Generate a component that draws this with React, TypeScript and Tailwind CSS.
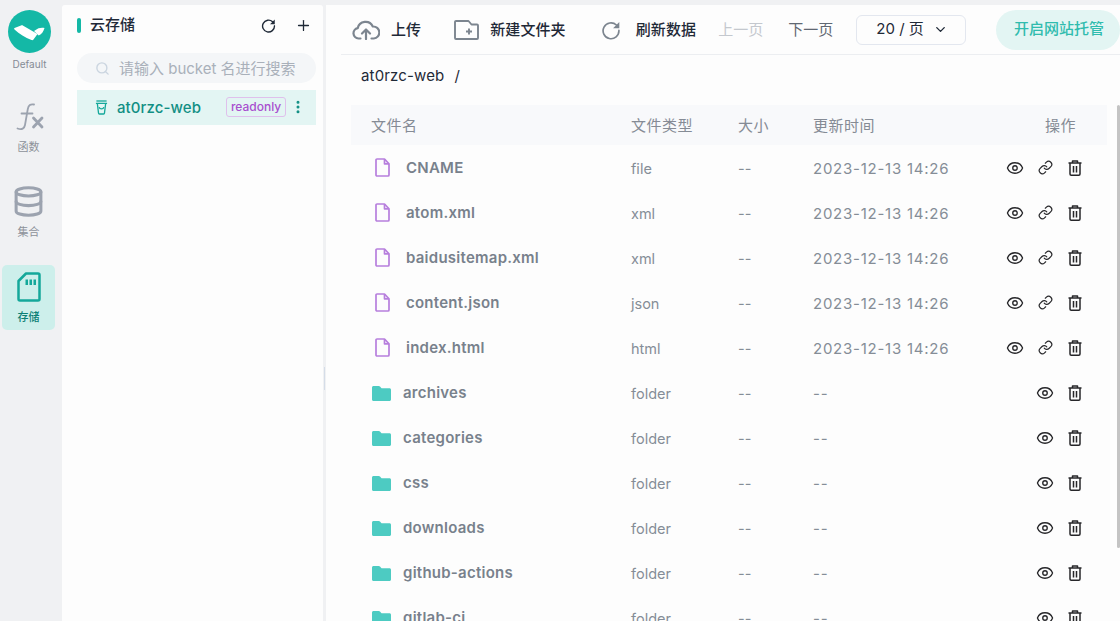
import { Search, Plus, Eye, Link, ChevronDown, EllipsisVertical, Database } from 'lucide-react';

const FONT = "font-['Inter','Noto_Sans_CJK_SC',sans-serif]";

type Row = { name: string; type: string; time: string; folder?: boolean };

const ROWS: Row[] = [
  { name: 'CNAME', type: 'file', time: '2023-12-13 14:26' },
  { name: 'atom.xml', type: 'xml', time: '2023-12-13 14:26' },
  { name: 'baidusitemap.xml', type: 'xml', time: '2023-12-13 14:26' },
  { name: 'content.json', type: 'json', time: '2023-12-13 14:26' },
  { name: 'index.html', type: 'html', time: '2023-12-13 14:26' },
  { name: 'archives', type: 'folder', time: '--', folder: true },
  { name: 'categories', type: 'folder', time: '--', folder: true },
  { name: 'css', type: 'folder', time: '--', folder: true },
  { name: 'downloads', type: 'folder', time: '--', folder: true },
  { name: 'github-actions', type: 'folder', time: '--', folder: true },
  { name: 'gitlab-ci', type: 'folder', time: '--', folder: true },
];

function Logo() {
  return (
    <svg viewBox="0 0 43 43" className="h-[43px] w-[43px]">
      <circle cx="21.500" cy="21.500" r="21.500" fill="#14b8a6" />
      <path d="M6.500 18 13 15.500c.8-.3 1.500-.2 2.200.2L29.500 24l-4 5.500c-.5.700-1.300.8-2 .5C17 27.500 11.500 24 6.500 19.500c-.5-.5-.5-1.200 0-1.500z" fill="#fff" />
      <path d="M26 21 30.500 18.300c2-.8 4.500-.8 6-.3-.8 3.300-2.700 6-5.800 7.500z" fill="#fff" />
    </svg>
  );
}

function FxIcon() {
  return (
    <svg viewBox="0 0 30 28" className="h-[28px] w-[30px]" fill="none" stroke="#9ca3af" strokeWidth="2.200" strokeLinecap="round">
      <path d="M20 1.500c-3.500-.8-5.500.8-6.200 4.500l-2.800 16c-.6 3.500-3 5-7.500 3.500" strokeWidth="1.800" />
      <path d="M7.500 10.500h11" strokeWidth="1.800" />
      <path d="M19.500 15l8.500 9M28 15l-8.500 9" strokeWidth="2.800" />
    </svg>
  );
}

function RefreshIcon({ className, width = 2.200 }: { className?: string; width?: number }) {
  return (
    <svg viewBox="0 0 24 24" className={className} fill="none" stroke="currentColor" strokeWidth={width} strokeLinecap="round">
      <path d="M18.500 6A9.500 9.500 0 1 0 21.500 12.500" />
      <path d="M22 2.500v7.500h-7.500z" fill="currentColor" stroke="none" />
    </svg>
  );
}

function CloudIcon() {
  return (
    <svg viewBox="0 0 28 20" className="mr-[11px] h-[20px] w-[28px]" fill="none" stroke="#7c858f" strokeWidth="2.200" strokeLinecap="round" strokeLinejoin="round">
      <path d="M8.500 18.500H6.500a5.200 5.200 0 0 1-.8-10.300A8 8 0 0 1 20.800 6.500a6 6 0 0 1 1 12h-2.300" />
      <path d="M14 19v-9M10 13.500l4-4 4 4" />
    </svg>
  );
}

function FolderPlusIcon() {
  return (
    <svg viewBox="0 0 25 20" className="mr-[10px] h-[20px] w-[27px]" fill="none" stroke="#7c858f" strokeWidth="1.900" strokeLinejoin="round">
      <path d="M2 1h12.500l3 3.500H23a1 1 0 0 1 1 1V18a1 1 0 0 1-1 1H2a1 1 0 0 1-1-1V2a1 1 0 0 1 1-1z" />
      <path d="M15 8.500v6M12 11.500h6" />
    </svg>
  );
}

function FileIcon() {
  return (
    <svg viewBox="0 0 15 19" className="h-[19px] w-[15px]" fill="none" stroke="#b77fdd" strokeWidth="1.700" strokeLinejoin="round">
      <path d="M2 1h7.500L14 5.800V17a1 1 0 0 1-1 1H2a1 1 0 0 1-1-1V2a1 1 0 0 1 1-1z" />
      <path d="M9.500 1v4.800H14" />
    </svg>
  );
}

function FolderIcon() {
  return (
    <svg viewBox="0 0 19 15" className="h-[15px] w-[19px]" fill="#4dcbc2">
      <path d="M1.500 0h5.200c.6 0 1 .2 1.300.6L9.500 2.200h8c.8 0 1.500.7 1.500 1.500v9.800c0 .8-.7 1.500-1.500 1.500h-16C.7 15 0 14.300 0 13.500v-12C0 .7.700 0 1.500 0z" />
    </svg>
  );
}

function TrashIcon() {
  return (
    <svg viewBox="0 0 14 16" className="h-[16px] w-[14px]" fill="none" stroke="#27272a" strokeWidth="1.500" strokeLinejoin="round">
      <path d="M.5 3h13M4.500 3V1h5v2" />
      <path d="M2 3v11a1.200 1.200 0 0 0 1.200 1.200h7.600A1.200 1.200 0 0 0 12 14V3" />
      <path d="M5.500 6v6.500M8.500 6v6.500" />
    </svg>
  );
}

function SdCard({ className }: { className?: string }) {
  return (
    <svg viewBox="0 0 24 30" className={className} fill="none">
      <path d="M9 1.500h12a1.500 1.500 0 0 1 1.500 1.500v24a1.500 1.500 0 0 1-1.500 1.500H3A1.500 1.500 0 0 1 1.500 27V9z" stroke="#14a89a" strokeWidth="2.500" strokeLinejoin="round" />
      <path d="M8.500 7.500H11v5.500H8.500zM12.500 7.500H15v5.500h-2.500zM16.500 7.500H19v5.500h-2.500z" fill="#14a89a" />
    </svg>
  );
}

function Rail() {
  return (
    <aside className="flex w-[62px] shrink-0 flex-col items-start pl-[2px] pt-[10px]">
      <div className="flex w-[55px] flex-col items-center">
        <Logo />
        <span className="mt-[5px] text-[10px] leading-[13px] text-[#858b95]">Default</span>
      </div>
      <div className="mt-[24px] flex h-[65px] w-[53px] flex-col items-center pt-[8px]">
        <FxIcon />
        <span className="mt-[9px] text-[11px] leading-[14px] text-[#8d929a]">函数</span>
      </div>
      <div className="mt-[20px] flex h-[65px] w-[53px] flex-col items-center pt-[5px]">
        <Database className="h-[33px] w-[33px] text-[#9ca3af]" strokeWidth={2.200} />
        <span className="mt-[7px] text-[11px] leading-[14px] text-[#8d929a]">集合</span>
      </div>
      <div className="mt-[20px] flex h-[65px] w-[53px] flex-col items-center rounded-[5px] bg-[#cdefeb] pt-[7px]">
        <SdCard className="h-[30px] w-[24px]" />
        <span className="mt-[8px] text-[11px] font-medium leading-[14px] text-[#0b7f75]">存储</span>
      </div>
    </aside>
  );
}

function BucketPanel() {
  return (
    <section className="mt-[5px] flex w-[261px] shrink-0 flex-col rounded-t-[3px] bg-[#fdfdfd] pl-[15px] pr-[7px]">
      <div className="flex h-[40px] items-center">
        <span className="h-[15px] w-[4px] rounded-[2px] bg-[#14b8a6]" />
        <span className="ml-[9px] flex-1 text-[15px] font-medium text-[#1f2937]">云存储</span>
        <RefreshIcon className="mr-[19px] h-[15px] w-[15px] text-[#1f2937]" />
        <Plus className="mr-[4px] h-[17px] w-[17px] text-[#1f2937]" strokeWidth={1.800} />
      </div>
      <div className="mt-[8px] flex h-[30px] items-center rounded-full bg-[#f4f6f8] pl-[18px]">
        <Search className="h-[15px] w-[15px] text-[#cbd5e0]" strokeWidth={2.200} />
        <span className="ml-[9px] translate-y-[1px] whitespace-nowrap text-[15px] text-[#a9b0ba]">请输入 bucket 名进行搜索</span>
      </div>
      <div className="mt-[7px] flex h-[35px] items-center bg-[#e3f5f3] pl-[18px]">
        <svg viewBox="0 0 14 16" className="h-[15px] w-[13px]" fill="none" stroke="#14a89a" strokeWidth="1.400">
          <path d="M1 3.500h12M2.500 3.500l1.300 10.500c0 .6.500 1 1 1h4.400c.5 0 1-.4 1-1l1.300-10.500" />
          <path d="M1.500 1h11" />
          <path d="M4.500 7.500c.5 2.500 4.500 2.500 5 0" />
        </svg>
        <span className="ml-[9px] translate-y-[1px] whitespace-nowrap text-[15px] font-medium tracking-[0.1px] text-[#118f84]">at0rzc-web</span>
        <span className="ml-[25px] flex h-[20px] w-[60px] -translate-y-[1px] items-center justify-center rounded-[3px] border border-[#dfc0ec] text-[12px] font-medium leading-none text-[#a84fcf]">readonly</span>
        <EllipsisVertical className="ml-[4px] h-[16px] w-[16px] -translate-y-[1px] text-[#118f84]" strokeWidth={2.500} />
      </div>
    </section>
  );
}

function ToolAction({ icon, label }: { icon: React.ReactNode; label: string }) {
  return (
    <div className="flex items-center">
      {icon}
      <span className="translate-y-[1px] whitespace-nowrap text-[15px] font-medium tracking-[0.1px] text-[#1f2937]">{label}</span>
    </div>
  );
}

function Toolbar() {
  return (
    <div className="ml-[15px] flex h-[50px] shrink-0 items-center border-b border-[#eceef1] pl-[11px]">
      <ToolAction icon={<CloudIcon />} label="上传" />
      <div className="ml-[32px]">
        <ToolAction icon={<FolderPlusIcon />} label="新建文件夹" />
      </div>
      <div className="ml-[35px]">
        <ToolAction icon={<RefreshIcon className="mr-[15px] h-[20px] w-[20px] text-[#7c858f]" width={2} />} label="刷新数据" />
      </div>
      <span className="ml-[22px] translate-y-[1px] whitespace-nowrap text-[15px] text-[#c4c8ce]">上一页</span>
      <span className="ml-[25px] translate-y-[1px] whitespace-nowrap text-[15px] text-[#5f6772]">下一页</span>
      <div className="ml-[23px] flex h-[30px] w-[110px] items-center justify-center whitespace-nowrap rounded-[6px] border border-[#e3e7ef] pl-[2px] text-[15px] text-[#1f2937]">
        20 / 页
        <ChevronDown className="ml-[9px] h-[15px] w-[15px]" strokeWidth={2.200} />
      </div>
      <div className="ml-[30px] flex h-[40px] w-[124px] shrink-0 items-center justify-center whitespace-nowrap rounded-full bg-[#e3f5f3] pl-[2px] text-[15px] font-medium text-[#30bcae]">
        开启网站托管
      </div>
    </div>
  );
}

function ActionIcon({ children }: { children: React.ReactNode }) {
  return <span className="flex w-[30px] justify-center">{children}</span>;
}

function FileRow({ row }: { row: Row }) {
  return (
    <div className="flex h-[45px] shrink-0 items-center text-[14.500px] text-[#858d97]">
      <div className="flex w-[280px] items-center">
        {row.folder ? (
          <>
            <span className="ml-[21px] flex w-[31px] translate-y-[1px]">
              <FolderIcon />
            </span>
            <span className="translate-y-[1px] text-[15px] font-semibold tracking-[0.25px] text-[#78818c]">{row.name}</span>
          </>
        ) : (
          <>
            <span className="ml-[24px] flex w-[31px]">
              <FileIcon />
            </span>
            <span className="translate-y-[1px] text-[15px] font-semibold tracking-[0.25px] text-[#78818c]">{row.name}</span>
          </>
        )}
      </div>
      <span className="w-[107px] translate-y-[1px]">{row.type}</span>
      <span className="w-[75px] translate-y-[1px]">--</span>
      <span className="w-[180px] translate-y-[2px] text-[15px] tracking-[0.75px]">{row.time}</span>
      <div className="flex flex-1 items-center justify-end pr-[17px] text-[#27272a]">
        <ActionIcon>
          <Eye className="h-[18px] w-[18px]" strokeWidth={1.800} />
        </ActionIcon>
        {!row.folder && (
          <ActionIcon>
            <Link className="h-[15px] w-[15px]" strokeWidth={1.900} />
          </ActionIcon>
        )}
        <ActionIcon>
          <TrashIcon />
        </ActionIcon>
      </div>
    </div>
  );
}

function FileTable() {
  return (
    <div className="relative min-h-0 flex-1 overflow-hidden pl-[25px] pr-[13px]">
      <div className="flex h-[40px] items-center whitespace-nowrap bg-[#f8f9fb] pt-[2px] text-[15px] tracking-[0.5px] text-[#858b95]">
        <span className="w-[280px] pl-[20px]">文件名</span>
        <span className="w-[107px]">文件类型</span>
        <span className="w-[75px]">大小</span>
        <span className="flex-1">更新时间</span>
        <span className="pr-[31px]">操作</span>
      </div>
      <div className="flex flex-col">
        {ROWS.map((row) => (
          <FileRow key={row.name} row={row} />
        ))}
      </div>
      <div className="absolute right-0 top-0 h-[443px] w-[3px] rounded-[2px] bg-[#c4c4c4]" />
    </div>
  );
}

export default function App() {
  return (
    <div className={`flex h-[621px] w-[1120px] overflow-hidden bg-[#f0f1f3] ${FONT}`}>
      <Rail />
      <BucketPanel />
      <div className="relative w-[3px] shrink-0">
        <span className="absolute left-[1px] top-[367px] h-[23px] w-[1px] bg-[#d5dde8]" />
      </div>
      <main className="mt-[5px] flex min-w-0 flex-1 flex-col bg-[#fdfdfd]">
        <Toolbar />
        <div className="flex h-[50px] shrink-0 items-center pb-[7px] pl-[35px] text-[15px] tracking-[0.15px] text-[#1f2937]">
          at0rzc-web<span className="ml-[10px]">/</span>
        </div>
        <FileTable />
      </main>
    </div>
  );
}
